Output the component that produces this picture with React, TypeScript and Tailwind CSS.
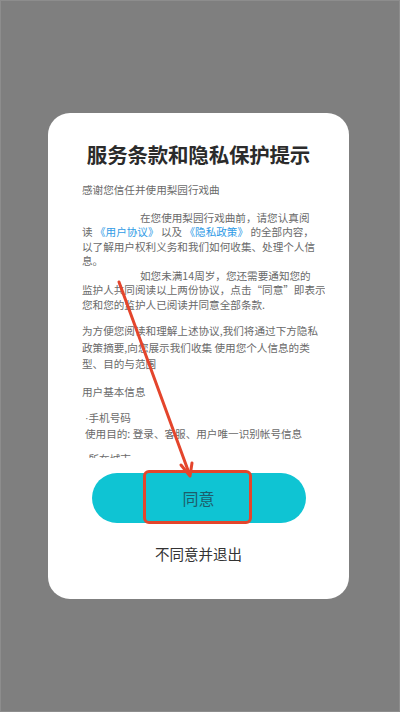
import React from 'react'

const cjk = { fontFamily: '"Noto Sans CJK SC", "Noto Sans", sans-serif' }

function Indent() {
    return <span className="inline-block w-[58px]" />
}

function Dot() {
    return <span className="font-['Liberation_Sans']">·</span>
}

export default function App() {
    return (
        <div
            className="relative w-[400px] h-[712px] bg-[#7f7f7f] border border-[#8d8d8d] box-border overflow-hidden"
            style={cjk}
        >
            <div className="ml-[47px] mt-[112px] w-[301px] h-[486px] bg-white rounded-[22px] flex flex-col">
                {/* Title */}
                <h1 className="mt-[29px] text-center text-[20.5px] leading-[24px] font-bold text-[#2b2b2b] tracking-[-0.2px]">
                    服务条款和隐私保护提示
                </h1>

                {/* Scrollable terms */}
                <div className="mt-[17px] ml-[34px] mr-[24px] h-[275px] overflow-hidden text-[10.6px] text-[#6a6a6a] whitespace-nowrap">
                    <p className="leading-[14.5px]">感谢您信任并使用梨园行戏曲</p>

                    <p className="mt-[13px] leading-[14.5px]">
                        <Indent />在您使用梨园行戏曲前，请您认真阅
                        <br />
                        读 <span className="text-[#2f9be6]">《用户协议》</span> 以及 <span className="text-[#2f9be6]">《隐私政策》</span> 的全部内容，
                        <br />
                        以了解用户权利义务和我们如何收集、处理个人信
                        <br />
                        息。
                        <br />
                        <Indent />如您未满14周岁，您还需要通知您的
                        <br />
                        监护人共同阅读以上两份协议，点击“同意”即表示
                        <br />
                        您和您的监护人已阅读并同意全部条款.
                    </p>

                    <p className="mt-[11px] leading-[16.5px]">
                        为方便您阅读和理解上述协议,我们将通过下方隐私
                        <br />
                        政策摘要,向您展示我们收集 使用您个人信息的类
                        <br />
                        型、目的与范围
                    </p>

                    <p className="mt-[11px] leading-[16.5px]">用户基本信息</p>

                    <p className="mt-[10px] pl-[3px] leading-[15px]">
                        <Dot />手机号码
                        <br />
                        使用目的: 登录、客服、用户唯一识别帐号信息
                    </p>

                    <p className="mt-[10px] pl-[3px] leading-[15px]">
                        <Dot />所在城市
                    </p>
                </div>

                {/* Agree button */}
                <div className="relative mt-[15px] mx-auto w-[214px]">
                    <button className="w-full h-[50px] rounded-full bg-[#0fc4d3] text-[16px] text-[#1d5d6a]">
                        同意
                    </button>
                    <div className="absolute left-[51px] top-[-3px] w-[109px] h-[54px] border-[3px] border-[#e4452c] rounded-[6px]" />
                </div>

                <button className="mt-[21px] mx-auto text-[14.5px] leading-[20px] text-[#333333]">
                    不同意并退出
                </button>
            </div>

            {/* Annotation arrow */}
            <svg className="absolute left-0 top-0 pointer-events-none" width="400" height="712" viewBox="0 0 400 712">
                <line x1="118" y1="281" x2="188" y2="472" stroke="#e4452c" strokeWidth="3" strokeLinecap="round" />
                <polyline
                    points="180,464 189,475 191,462"
                    fill="none"
                    stroke="#e4452c"
                    strokeWidth="3"
                    strokeLinecap="round"
                    strokeLinejoin="round"
                />
            </svg>
        </div>
    )
}
